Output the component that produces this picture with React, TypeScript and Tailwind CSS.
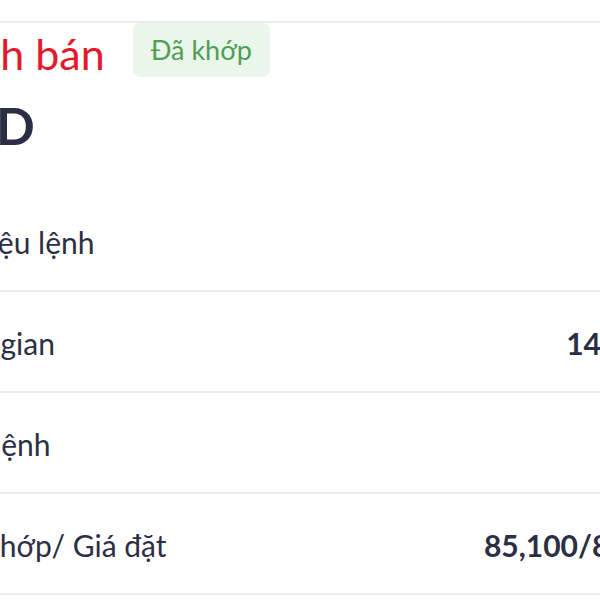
const rows = [
  { label: 'Số hiệu lệnh', value: '' },
  { label: 'Thời gian', value: '14:25:36' },
  { label: 'Loại lệnh', value: 'LO' },
  { label: 'Giá khớp/ Giá đặt', value: '85,100/85,100' },
];

const App = () => {
  return (
    <div className="w-[600px] h-[600px] overflow-hidden bg-white font-['Lato',sans-serif] text-[#2b2f45]">
      <div className="h-[21px]" />
      <div className="ml-[-67px] w-[753px] border-t-2 border-[#ebebeb]">
        {/* Tiêu đề lệnh */}
        <div className="flex items-center gap-[28px] h-[54px]">
          <span className="text-[43px] leading-none text-[#e3192c] pt-[6px]">Lệnh bán</span>
          <span className="flex items-center h-[54px] px-[18px] rounded-[7px] bg-[#eaf5eb] text-[27px] text-[#4e9f52]">
            Đã khớp
          </span>
        </div>
        <div className="h-[114px] pt-[23px] ml-[-15px]">
          <span className="block text-[51px] font-bold leading-none">HDD</span>
        </div>

        {rows.map((row) => (
          <div
            key={row.label}
            className="flex items-center justify-between h-[101px] pt-[3px] border-b-2 border-[#ebebeb] text-[30px] leading-[36px]"
          >
            <span>{row.label}</span>
            <span className="font-bold">{row.value}</span>
          </div>
        ))}
      </div>
    </div>
  );
};

export default App;
